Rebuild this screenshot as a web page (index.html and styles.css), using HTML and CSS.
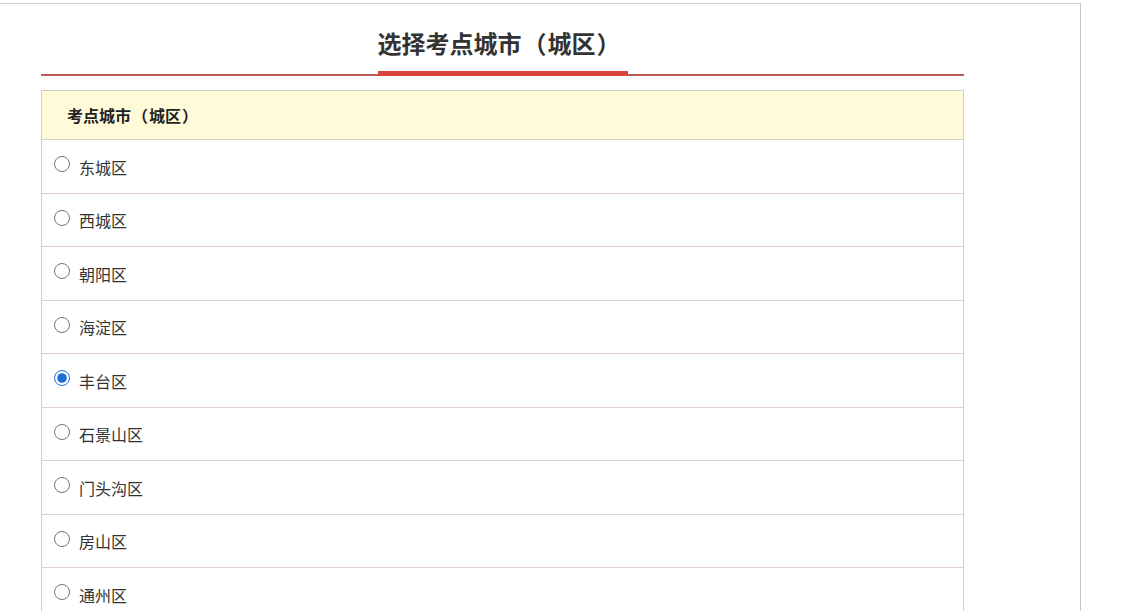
FILE: index.html
```html
<!DOCTYPE html>
<html lang="zh-CN">
<head>
  <meta charset="UTF-8">
  <title>选择考点城市（城区）</title>
  <link rel="stylesheet" href="styles.css">
</head>
<body>

  <div class="page">
    <div class="inner">
      <div class="title">
        <h2>选择考点城市<span class="p">（</span>城区<span class="p">）</span></h2>
      </div>

      <div class="city-table">
        <div class="head">考点城市<span class="p">（</span>城区<span class="p">）</span></div>
        <label class="row"><input type="radio" name="city" value="1"><span>东城区</span></label>
        <label class="row"><input type="radio" name="city" value="2"><span>西城区</span></label>
        <label class="row"><input type="radio" name="city" value="3"><span>朝阳区</span></label>
        <label class="row"><input type="radio" name="city" value="4"><span>海淀区</span></label>
        <label class="row"><input type="radio" name="city" value="5" checked><span>丰台区</span></label>
        <label class="row"><input type="radio" name="city" value="6"><span>石景山区</span></label>
        <label class="row"><input type="radio" name="city" value="7"><span>门头沟区</span></label>
        <label class="row"><input type="radio" name="city" value="8"><span>房山区</span></label>
        <label class="row"><input type="radio" name="city" value="9"><span>通州区</span></label>
      </div>
    </div>
  </div>

</body>
</html>
```

FILE: styles.css
```css
body {
  margin: 0;
  font-family: "Noto Sans CJK SC", "Liberation Sans", sans-serif;
  color: #333;
  background: #fff;
}
.page {
  margin-top: 3px;
  width: 1081px;
  min-height: 700px;
  border-top: 1px solid #d4d0cc;
  border-right: 1px solid #c8c4c4;
  box-sizing: border-box;
}
.inner {
  margin-left: 41px;
  width: 923px;
}
.title {
  display: flex;
  justify-content: center;
  align-items: flex-end;
  height: 70px;
  border-bottom: 2px solid #b85c58;
}
.title h2 {
  margin: 0 0 -2px;
  padding: 0 6px 13px 0;
  font-size: 24px;
  line-height: 30px;
  font-weight: bold;
  color: #333;
  border-bottom: 5px solid #d6463c;
}
.title .p {
  margin: 0 1px;
}
.city-table {
  margin-top: 14px;
  border: 1px solid #d2cccc;
}
.head {
  height: 48px;
  line-height: 48px;
  padding-left: 25px;
  background-color: #fffad8;
  border-bottom: 1px solid #d8d0c4;
  font-size: 16px;
  font-weight: bold;
  color: #222;
}
.head .p {
  margin: 0 1px;
}
.row {
  display: flex;
  align-items: center;
  gap: 9px;
  height: 53.5px;
  box-sizing: border-box;
  padding-left: 12px;
  border-bottom: 1px solid #e2cfd3;
  font-size: 16px;
  color: #333;
  cursor: pointer;
}
.row input {
  width: 16px;
  height: 16px;
  margin: -4px 0 0;
  accent-color: #1a6fd6;
}
.row span {
  line-height: 20px;
  margin-top: 1px;
}
```
